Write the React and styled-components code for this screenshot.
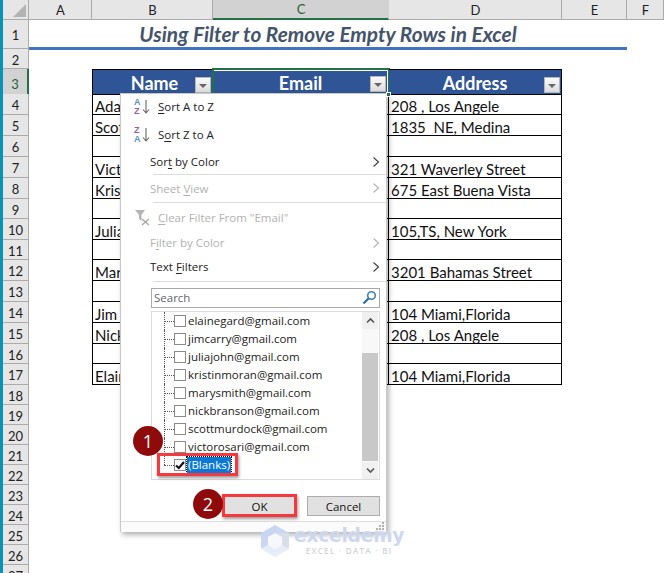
import React from "react";
import styled, { createGlobalStyle } from "styled-components";

const GlobalStyle = createGlobalStyle`
  html, body {
    margin: 0;
    padding: 0;
    background: #fff;
    overflow: hidden;
  }
  * {
    box-sizing: border-box;
  }
`;

const COLUMNS = "26px 63px 121px 176px 173px 65px 37px";

const Page = styled.div`
  width: 664px;
  height: 573px;
  display: flex;
  overflow: hidden;
  position: relative;
  font-family: "Lato", "Liberation Sans", sans-serif;
`;

const EdgeStrip = styled.div`
  width: 3px;
  flex: none;
  background: #0a93b0;
`;

const Sheet = styled.div`
  flex: 1;
  display: flex;
  flex-direction: column;
`;

const Row = styled.div`
  display: grid;
  grid-template-columns: ${COLUMNS};
  height: ${({ $h }) => $h}px;
  flex: none;
`;

const Corner = styled.div`
  background: #e6e6e6;
  border-right: 1px solid #ababab;
  border-bottom: 1px solid #ababab;
  display: flex;
  align-items: flex-end;
  justify-content: flex-end;
  padding: 0 2px 2px 0;
`;

const ColHead = styled.div`
  background: ${({ $active }) => ($active ? "#d2d2d2" : "#e6e6e6")};
  border-right: 1px solid ${({ $active }) => ($active ? "#d2d2d2" : "#ababab")};
  border-bottom: ${({ $active }) => ($active ? "2px solid #217346" : "1px solid #ababab")};
  color: ${({ $active }) => ($active ? "#1f5f3b" : "#222")};
  font-size: 13px;
  padding-left: 1px;
  display: flex;
  align-items: center;
  justify-content: center;
`;

const RowNum = styled.div`
  background: ${({ $active }) => ($active ? "#d2d2d2" : "#e6e6e6")};
  border-right: ${({ $active }) => ($active ? "2px solid #217346" : "1px solid #ababab")};
  border-bottom: 1px solid #ababab;
  color: ${({ $active }) => ($active ? "#1f5f3b" : "#222")};
  font-size: 13px;
  padding-top: ${({ $active }) => ($active ? "5px" : "2px")};
  display: flex;
  align-items: center;
  justify-content: center;
`;

const TitleCell = styled.div`
  grid-column: 2 / span 5;
  border-bottom: 3px solid #4472c4;
  margin-bottom: -1px;
  color: #44546a;
  font-size: 20.8px;
  font-weight: 700;
  font-style: italic;
  display: flex;
  align-items: center;
  justify-content: center;
`;

const Spacer = styled.div`
  grid-column: ${({ $col }) => $col};
`;

const HeaderCell = styled.div`
  position: relative;
  background: #2f5597;
  color: #fff;
  font-size: 18px;
  font-weight: 700;
  border-top: 1px solid #000;
  border-bottom: 1px solid #000;
  border-right: 1px solid #000;
  border-left: ${({ $first }) => ($first ? "1px solid #000" : "none")};
  display: flex;
  align-items: center;
  justify-content: center;
  padding-top: 2px;
  padding-left: ${({ $first }) => ($first ? "4px" : "0")};
  outline: ${({ $selected }) => ($selected ? "2px solid #217346" : "none")};
  outline-offset: -1px;
  box-shadow: ${({ $selected }) => ($selected ? "inset 0 0 0 1px #fff" : "none")};
`;

const FillHandle = styled.span`
  position: absolute;
  right: -3px;
  bottom: -3px;
  width: 5px;
  height: 5px;
  background: #217346;
  border: 1px solid #fff;
  z-index: 1;
`;

const FilterButton = styled.div`
  position: absolute;
  right: ${({ $inset }) => $inset || 1}px;
  bottom: ${({ $inset }) => $inset || 1}px;
  width: 16px;
  height: 16px;
  background: linear-gradient(#fafafa, #dcdcdc);
  border: 1px solid #b5b5b5;
  display: flex;
  align-items: center;
  justify-content: center;
  &::after {
    content: "";
    border-left: 4px solid transparent;
    border-right: 4px solid transparent;
    border-top: 4px solid #666;
    margin-top: 1px;
  }
`;

const DataCell = styled.div`
  border-bottom: 1px solid #000;
  border-right: 1px solid #000;
  border-left: ${({ $first }) => ($first ? "1px solid #000" : "none")};
  color: #111;
  font-size: 15px;
  line-height: 20px;
  padding: 2px 0 0 2px;
  white-space: pre;
  overflow: hidden;
`;

const Menu = styled.div`
  position: absolute;
  left: 120px;
  top: 93px;
  width: 267px;
  height: 439px;
  background: #fff;
  border: 1px solid #c8c8c8;
  box-shadow: 2px 3px 5px rgba(0, 0, 0, 0.3);
  display: flex;
  flex-direction: column;
  font-family: "Open Sans", "Noto Sans", sans-serif;
  font-size: 11.5px;
  color: #222;
`;

const MenuItem = styled.div`
  height: ${({ $h }) => $h}px;
  flex: none;
  display: flex;
  align-items: center;
  padding: 0 6px 1px ${({ $indent }) => $indent}px;
  color: ${({ $off }) => ($off ? "#b1b1b1" : "#222")};
`;

const MenuIcon = styled.span`
  width: 24px;
  margin-left: -17px;
  flex: none;
  display: flex;
  align-items: center;
`;

const SortLetters = styled.span`
  display: flex;
  flex-direction: column;
  font-family: "Liberation Sans", sans-serif;
  font-size: 9px;
  font-weight: 700;
  line-height: 9px;
  margin-right: 1px;
`;

const Letter = styled.span`
  color: ${({ $tone }) => ($tone === "blue" ? "#5b8fc7" : "#8a63a8")};
`;

const Mnemonic = styled.span`
  text-decoration: underline;
  text-underline-offset: 2px;
`;

const ItemLabel = styled.span`
  flex: 1;
`;

const Separator = styled.div`
  height: 1px;
  flex: none;
  background: #dcdcdc;
  margin-left: 32px;
`;

const SearchBox = styled.div`
  height: 20px;
  margin: 6px 6px 0 30px;
  flex: none;
  border: 1px solid #a9a9a9;
  display: flex;
  align-items: center;
  justify-content: space-between;
  padding: 0 2px 2px 2px;
  color: #666;
`;

const ListBox = styled.div`
  height: 169px;
  margin: 3px 6px 0 30px;
  flex: none;
  border: 1px solid #dcdcdc;
  display: flex;
  position: relative;
`;

const TreeList = styled.div`
  flex: 1;
  padding: 0 0 0 12px;
`;

const TreeRow = styled.div`
  height: 18px;
  display: flex;
  align-items: center;
  position: relative;
  &::before {
    content: "";
    position: absolute;
    left: 0;
    top: 0;
    bottom: ${({ $last }) => ($last ? "9px" : "0")};
    border-left: 1px dotted #555;
  }
`;

const TreeDash = styled.span`
  width: 10px;
  flex: none;
  border-top: 1px dotted #555;
`;

const CheckBox = styled.span`
  width: 12px;
  height: 12px;
  flex: none;
  border: 1px solid #8a8a8a;
  background: #fff;
  display: flex;
  align-items: center;
  justify-content: center;
`;

const TreeLabel = styled.span`
  margin-left: 1px;
  padding: 0 1px;
  line-height: 16px;
  color: ${({ $picked }) => ($picked ? "#fff" : "#222")};
  background: ${({ $picked }) => ($picked ? "#0a78d7" : "transparent")};
  outline: ${({ $picked }) => ($picked ? "1px dotted #111" : "none")};
`;

const ScrollTrack = styled.div`
  width: 16px;
  margin-right: 1px;
  flex: none;
  display: flex;
  flex-direction: column;
  align-items: center;
  background: #f8f8f8;
`;

const ScrollArrow = styled.div`
  width: 16px;
  height: 17px;
  flex: none;
  background: #f0f0f0;
  display: flex;
  align-items: center;
  justify-content: center;
`;

const ScrollGap = styled.div`
  height: ${({ $h }) => $h}px;
  width: 16px;
`;

const ScrollThumb = styled.div`
  height: 108px;
  width: 16px;
  background: #c8c8c8;
`;

const ButtonRow = styled.div`
  flex: none;
  height: 41px;
  display: flex;
  align-items: flex-end;
  justify-content: flex-end;
  gap: 11px;
  padding: 0 6px 5px 0;
`;

const DialogButton = styled.div`
  width: ${({ $w }) => $w}px;
  height: 20px;
  background: #e1e1e1;
  border: 1px solid #adadad;
  display: flex;
  align-items: center;
  justify-content: center;
  color: #111;
`;

const StatusBar = styled.div`
  flex: 1;
  border-top: 1px solid #dedede;
  background: #fbfbfb;
  display: flex;
  align-items: flex-end;
  justify-content: flex-end;
  padding: 0 1px 1px 0;
`;

const Callout = styled.div`
  position: absolute;
  left: ${({ $x }) => $x}px;
  top: ${({ $y }) => $y}px;
  width: 30px;
  height: 30px;
  border-radius: 50%;
  background: #8f0b0b;
  color: #fff;
  font-family: "Open Sans", sans-serif;
  font-size: 18px;
  display: flex;
  align-items: center;
  justify-content: center;
`;

const RedBox = styled.div`
  position: absolute;
  left: ${({ $x }) => $x}px;
  top: ${({ $y }) => $y}px;
  width: ${({ $w }) => $w}px;
  height: ${({ $h }) => $h}px;
  border: 3px solid #f5393e;
  box-shadow: 1px 2px 3px rgba(0, 0, 0, 0.4);
`;

const Watermark = styled.div`
  position: absolute;
  left: 261px;
  top: 525px;
  display: flex;
  gap: 5px;
`;

const WatermarkText = styled.div`
  display: flex;
  flex-direction: column;
  align-items: center;
`;

const WatermarkName = styled.span`
  font-family: "DejaVu Sans", sans-serif;
  font-size: 18.6px;
  font-weight: 700;
  line-height: 22px;
  letter-spacing: -0.2px;
  color: #cdd8ef;
`;

const WatermarkTag = styled.span`
  font-family: "Open Sans", sans-serif;
  font-size: 8px;
  font-weight: 600;
  line-height: 8px;
  letter-spacing: 1.3px;
  color: #d2d4d9;
`;

const Chevron = ({ off }) => (
  <svg width="8" height="12" viewBox="0 0 8 12">
    <path d="M1.5 1.5 L6.5 6 L1.5 10.5" fill="none" stroke={off ? "#b4b4b4" : "#444"} strokeWidth="1.2" />
  </svg>
);

const DownArrow = () => (
  <svg width="8" height="15" viewBox="0 0 8 15">
    <path d="M4 1 V14 M1 10.5 L4 14 L7 10.5" fill="none" stroke="#666" strokeWidth="1.1" />
  </svg>
);

const ClearFilterIcon = () => (
  <svg width="17" height="17" viewBox="0 0 17 17">
    <path d="M1 1 H11 L7.5 6 V12 L5 10 V6 Z" fill="#b5b5b5" />
    <path d="M8 10 L15 16 M15 10 L8 16" stroke="#a5a5a5" strokeWidth="1.3" />
  </svg>
);

const SearchIcon = () => (
  <svg width="15" height="15" viewBox="0 0 15 15">
    <circle cx="9.5" cy="5.5" r="3.8" fill="none" stroke="#3f80b8" strokeWidth="1.6" />
    <path d="M6.7 8.3 L1.5 13.5" stroke="#2f6ea6" strokeWidth="2.2" />
  </svg>
);

const Tick = () => (
  <svg width="10" height="10" viewBox="0 0 10 10">
    <path d="M1 5.5 L3.8 8 L9 2" fill="none" stroke="#111" strokeWidth="2.2" />
  </svg>
);

const ScrollChevron = ({ up }) => (
  <svg width="9" height="7" viewBox="0 0 9 7">
    <path d={up ? "M1 5.5 L4.5 2 L8 5.5" : "M1 1.5 L4.5 5 L8 1.5"} fill="none" stroke="#555" strokeWidth="1.6" />
  </svg>
);

const Grip = () => (
  <svg width="9" height="9" viewBox="0 0 9 9">
    <path d="M6 0h2v2H6zM3 3h2v2H3zM6 3h2v2H6zM0 6h2v2H0zM3 6h2v2H3zM6 6h2v2H6z" fill="#b0b0b0" />
  </svg>
);

const CubeLogo = () => (
  <svg width="28" height="32" viewBox="0 0 28 32">
    <path d="M14 0 L28 8 V16 L14 8 L7 12 V20 L0 24 V8 Z" fill="#c9d6f1" />
    <path d="M28 8 V24 L21 20 V12 L14 8 Z" fill="#d8dde7" />
    <path d="M0 24 L7 20 L14 24 L21 20 L28 24 L14 32 Z" fill="#e6ecf8" />
    <path d="M14 8 L21 12 V20 L14 24 L7 20 V12 Z" fill="#f7f8fb" />
  </svg>
);

const people = {
  4: ["Adam", "208 , Los Angele"],
  5: ["Scott", "1835  NE, Medina"],
  7: ["Victor", "321 Waverley Street"],
  8: ["Kristin", "675 East Buena Vista"],
  10: ["Julia", "105,TS, New York"],
  12: ["Mary", "3201 Bahamas Street"],
  14: ["Jim", "104 Miami,Florida"],
  15: ["Nick", "208 , Los Angele"],
  17: ["Elaine", "104 Miami,Florida"],
};

const emails = [
  "elainegard@gmail.com",
  "jimcarry@gmail.com",
  "juliajohn@gmail.com",
  "kristinmoran@gmail.com",
  "marysmith@gmail.com",
  "nickbranson@gmail.com",
  "scottmurdock@gmail.com",
  "victorosari@gmail.com",
];

const columns = ["A", "B", "C", "D", "E", "F"];
const tableRows = [4, 5, 6, 7, 8, 9, 10, 11, 12, 13, 14, 15, 16, 17];
const shortRows = [9, 11, 16];
const lowerRows = [18, 19, 20, 21, 22, 23, 24, 25, 26, 27];

const App = () => {
  return (
    <Page>
      <GlobalStyle />
      <EdgeStrip />
      <Sheet>
        <Row $h={20}>
          <Corner>
            <svg width="13" height="13" viewBox="0 0 13 13">
              <path d="M13 0 V13 H0 Z" fill="#b4b4b4" />
            </svg>
          </Corner>
          {columns.map((c) => (
            <ColHead key={c} $active={c === "C"}>
              {c}
            </ColHead>
          ))}
        </Row>
        <Row $h={29}>
          <RowNum>1</RowNum>
          <TitleCell>Using Filter to Remove Empty Rows in Excel</TitleCell>
        </Row>
        <Row $h={20}>
          <RowNum>2</RowNum>
        </Row>
        <Row $h={25}>
          <RowNum $active>3</RowNum>
          <Spacer $col={2} />
          <HeaderCell $first>
            Name
            <FilterButton />
          </HeaderCell>
          <HeaderCell $selected>
            Email
            <FilterButton $inset={2} />
            <FillHandle />
          </HeaderCell>
          <HeaderCell>
            Address
            <FilterButton />
          </HeaderCell>
        </Row>
        {tableRows.map((n) => {
          const person = people[n] || ["", ""];
          return (
            <Row key={n} $h={shortRows.includes(n) ? 20 : 21}>
              <RowNum>{n}</RowNum>
              <Spacer $col={2} />
              <DataCell $first>{person[0]}</DataCell>
              <DataCell />
              <DataCell>{person[1]}</DataCell>
            </Row>
          );
        })}
        {lowerRows.map((n) => (
          <Row key={n} $h={20}>
            <RowNum>{n}</RowNum>
          </Row>
        ))}
      </Sheet>

      <Menu>
        <MenuItem $h={26} $indent={30}>
          <MenuIcon>
            <SortLetters>
              <Letter $tone="blue">A</Letter>
              <Letter>Z</Letter>
            </SortLetters>
            <DownArrow />
          </MenuIcon>
          <ItemLabel>
            <Mnemonic>S</Mnemonic>ort A to Z
          </ItemLabel>
        </MenuItem>
        <MenuItem $h={30} $indent={30}>
          <MenuIcon>
            <SortLetters>
              <Letter>Z</Letter>
              <Letter $tone="blue">A</Letter>
            </SortLetters>
            <DownArrow />
          </MenuIcon>
          <ItemLabel>
            S<Mnemonic>o</Mnemonic>rt Z to A
          </ItemLabel>
        </MenuItem>
        <MenuItem $h={24} $indent={29}>
          <ItemLabel>
            Sor<Mnemonic>t</Mnemonic> by Color
          </ItemLabel>
          <Chevron />
        </MenuItem>
        <Separator />
        <MenuItem $h={27} $indent={29} $off>
          <ItemLabel>
            Sheet <Mnemonic>V</Mnemonic>iew
          </ItemLabel>
          <Chevron off />
        </MenuItem>
        <Separator />
        <MenuItem $h={30} $indent={30} $off>
          <MenuIcon>
            <ClearFilterIcon />
          </MenuIcon>
          <ItemLabel>
            <Mnemonic>C</Mnemonic>lear Filter From "Email"
          </ItemLabel>
        </MenuItem>
        <MenuItem $h={20} $indent={29} $off>
          <ItemLabel>
            F<Mnemonic>i</Mnemonic>lter by Color
          </ItemLabel>
          <Chevron off />
        </MenuItem>
        <MenuItem $h={28} $indent={29}>
          <ItemLabel>
            Text <Mnemonic>F</Mnemonic>ilters
          </ItemLabel>
          <Chevron />
        </MenuItem>
        <Separator />

        <SearchBox>
          Search
          <SearchIcon />
        </SearchBox>

        <ListBox>
          <TreeList>
            {emails.map((email) => (
              <TreeRow key={email}>
                <TreeDash />
                <CheckBox />
                <TreeLabel>{email}</TreeLabel>
              </TreeRow>
            ))}
            <TreeRow $last>
              <TreeDash />
              <CheckBox>
                <Tick />
              </CheckBox>
              <TreeLabel $picked>(Blanks)</TreeLabel>
            </TreeRow>
          </TreeList>
          <ScrollTrack>
            <ScrollArrow>
              <ScrollChevron up />
            </ScrollArrow>
            <ScrollGap $h={24} />
            <ScrollThumb />
            <ScrollGap $h={1} />
            <ScrollArrow>
              <ScrollChevron />
            </ScrollArrow>
          </ScrollTrack>
        </ListBox>

        <ButtonRow>
          <DialogButton $w={73}>OK</DialogButton>
          <DialogButton $w={73}>Cancel</DialogButton>
        </ButtonRow>
        <StatusBar>
          <Grip />
        </StatusBar>
      </Menu>

      <RedBox $x={157} $y={453} $w={81} $h={23} />
      <RedBox $x={222} $y={494} $w={75} $h={23} />
      <Callout $x={133} $y={426}>1</Callout>
      <Callout $x={193} $y={489}>2</Callout>

      <Watermark>
        <CubeLogo />
        <WatermarkText>
          <WatermarkName>exceldemy</WatermarkName>
          <WatermarkTag>EXCEL · DATA · BI</WatermarkTag>
        </WatermarkText>
      </Watermark>
    </Page>
  );
};

export default App;
